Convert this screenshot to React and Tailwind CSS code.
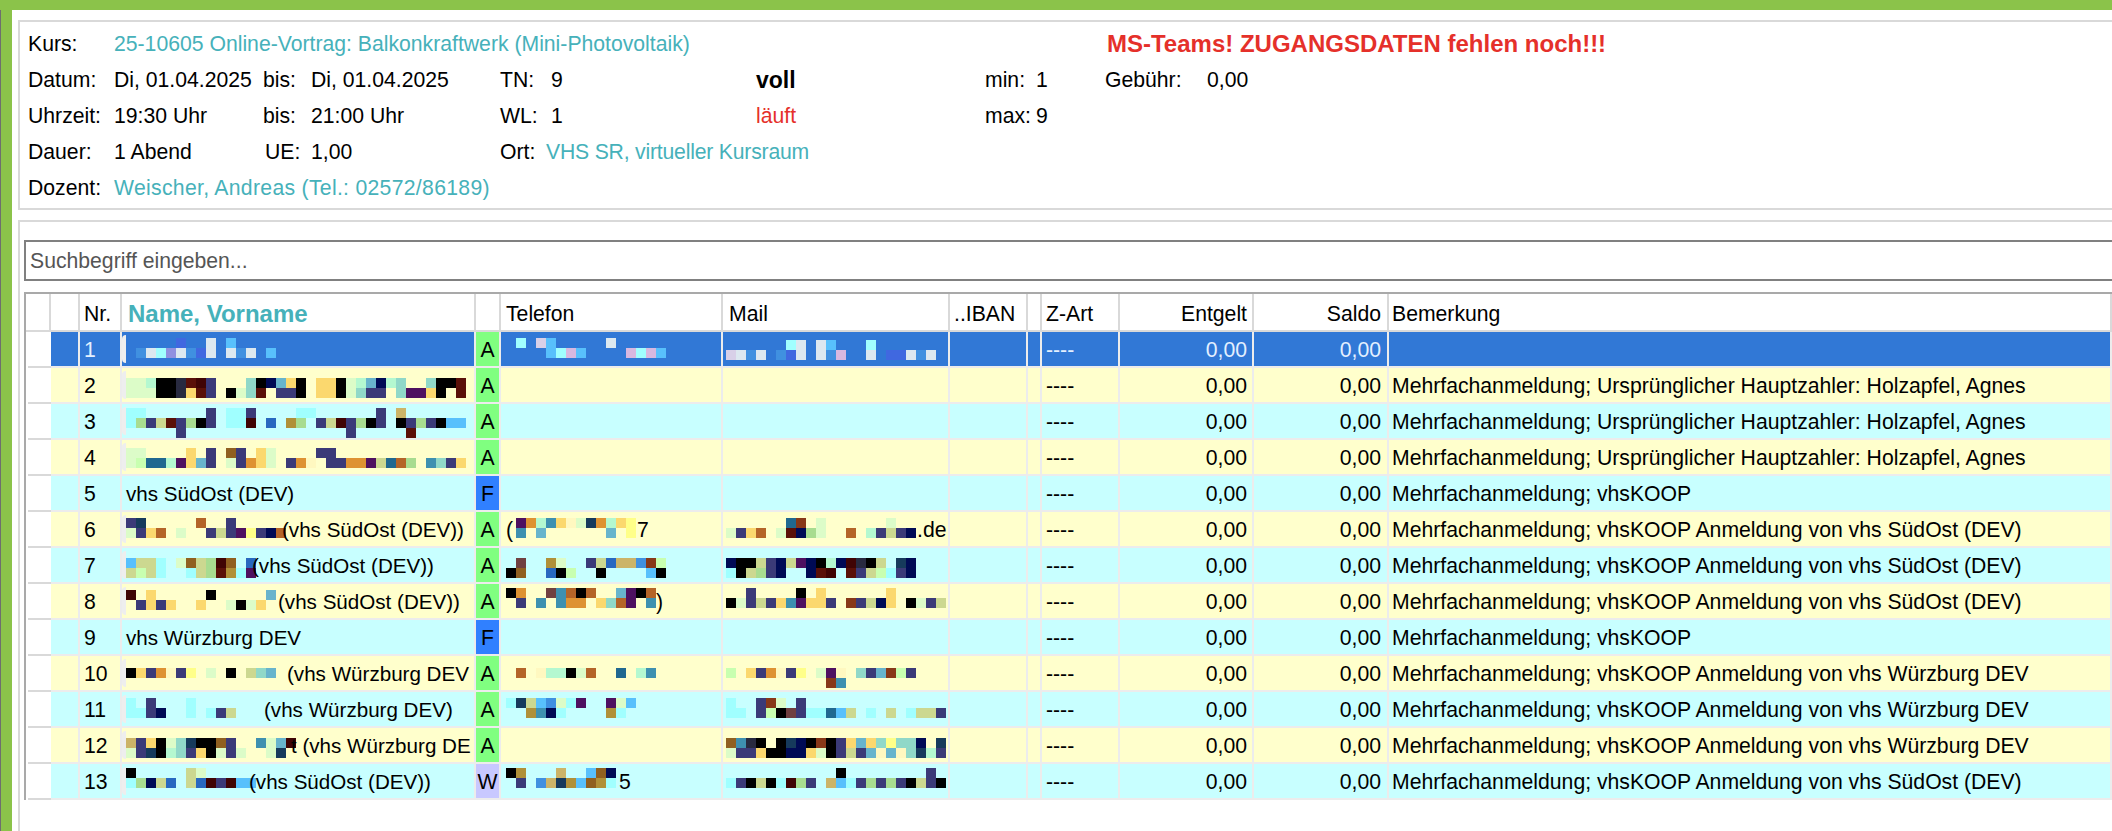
import React from "react";

const colors = {
  k: "#000000",
  n: "#3b3a78",
  N: "#000a55",
  r: "#5a1008",
  R: "#400404",
  y: "#fbd86e",
  Y: "#ffff88",
  e: "#fff8c0",
  o: "#de9232",
  O: "#906020",
  b: "#b46428",
  a: "#b09038",
  h: "#ccb468",
  t: "#3e90b0",
  T: "#68b4cc",
  D: "#163a5c",
  d: "#206890",
  g: "#dcfcc8",
  f: "#c8ffb0",
  G: "#a8dc90",
  m: "#b4f8d0",
  s: "#90d8c8",
  c: "#a0ffff",
  l: "#58c0fc",
  B: "#2868c0",
  C: "#4090e0",
  w: "#dce8f0",
  p: "#4e1060",
  P: "#883818",
  K: "#ccd890",
  v: "#d8d0e8",
  i: "#9090e0",
  I: "#4068e0",
  q: "#d8b8e0",
  x: "#282a40",
  z: "#704040",
};

const HM = "Mehrfachanmeldung; Ursprünglicher Hauptzahler: Holzapfel, Agnes";
const KOOP = "Mehrfachanmeldung; vhsKOOP";
const OST = "Mehrfachanmeldung; vhsKOOP Anmeldung von vhs SüdOst (DEV)";
const WUE = "Mehrfachanmeldung; vhsKOOP Anmeldung von vhs Würzburg DEV";

const rows = [
  {
    nr: 1, type: "A", sel: true, bem: "",
    name: { top: 6, blocks: [".....I..w.l", ".CwciwCIw.wCw.l"] },
    tel: { top: 6, blocks: [".c.vl.....w", "....lcql....qcql"] },
    mail: { top: 8, blocks: ["......cw.wl...c", "vwCw.CIw.wCq..w.IIwCw"] },
  },
  {
    nr: 2, type: "A", bem: HM,
    name: { top: 10, blocks: ["ggmkkxrRn...skNTyk.yykgmTNms..skkr", "gggkkxyrn.kgsr.nnk.yykgsnn.sppyk.r"] },
  },
  {
    nr: 3, type: "A", bem: HM,
    name: { top: 4, blocks: ["cc......n.ccn....cc......n.h", "cGnKrnGkn.ccR.B.aG.nKRnGkn.knGnkll", ".....n................n.....r"] },
  },
  {
    nr: 4, type: "A", bem: HM,
    name: { top: 8, blocks: ["gg....y.n.On.yg....nn", "gfddmpyTn.gnoyg.noe.nnoopKdbG.tsny"] },
  },
  { nr: 5, type: "F", name: "vhs SüdOst (DEV)", bem: KOOP },
  {
    nr: 6, type: "A", bem: OST,
    name: { top: 6, x: 160, text: "(vhs SüdOst (DEV))", blocks: ["nD.....b..n", "gnyb.g..nKnpYnNb"] },
    tel: { top: 6, pre: "(", x: 136, text: "7", blocks: [".pomtyegDomyY", ".t.T......T.Y"] },
    mail: { top: 6, x: 194, text: ".de", blocks: ["......dP.g......g", "gnyb.grNGg..b.mnKnN"] },
  },
  {
    nr: 7, type: "A", bem: OST,
    name: { top: 10, x: 130, text: "(vhs SüdOst (DEV))", blocks: ["lKKc.gOKGRO.B", "KfKc..cKGracp"] },
    tel: { top: 10, blocks: [".z..ag..nKBhhCPf", "kO..Bkf..k....lk"] },
    mail: { top: 10, blocks: ["NkkKnNKpNkmNRxkK.DN", "ckKGnN..NrR.rnKfcnN"] },
  },
  {
    nr: 8, type: "A", bem: OST,
    name: { top: 6, x: 156, text: "(vhs SüdOst (DEV))", blocks: ["R.y.....k.....T", ".nyny..y..gkgy"] },
    tel: { top: 4, x: 155, text: ")", blocks: ["ko..ztbkb..Tpkb", ".n.t.too.ysbp.t"] },
    mail: { top: 4, blocks: ["..n....k.y......y", "kgnKnytpyyn.PnKNy.kgnK"] },
  },
  { nr: 9, type: "F", name: "vhs Würzburg DEV", bem: KOOP },
  {
    nr: 10, type: "A", bem: WUE,
    name: { top: 12, x: 165, text: "(vhs Würzburg DEV", blocks: ["kynoenY.g.k.KsT"] },
    tel: { top: 12, blocks: [".b.emmkgb..d.mt"] },
    mail: { top: 12, blocks: ["f.ynoenY.gpe.snTPfn", "..........Pt"] },
  },
  {
    nr: 11, type: "A", bem: WUE,
    name: { top: 6, x: 142, text: "(vhs Würzburg DEV)", blocks: ["c.n...c", "ccnN..c.cnK"] },
    tel: { top: 6, blocks: ["cDKlCgcp..pgl", "..atNc....ac"] },
    mail: { top: 6, blocks: ["c..nPg.n", "cc.nfkznccdlK.c.K.cKKn"] },
  },
  {
    nr: 12, type: "A", bem: WUE,
    name: { top: 10, x: 169, text: "t (vhs Würzburg DE", blocks: ["hnykgsDkkOn..tgTR", "gnDkmsnykgng..gD"] },
    mail: { top: 10, blocks: ["Otxk.kDNkPknyTysYssN.D", "gnnykkNNygknKnTeTesDmn"] },
  },
  {
    nr: 13, type: "W", bem: OST,
    name: { top: 4, x: 127, text: "(vhs SüdOst (DEV))", blocks: ["k.....Kg", "cGNKB.KBRnRll"] },
    tel: { top: 4, x: 118, text: "5", blocks: ["ka...h..lON", ".n.ChDalOac"] },
    mail: { top: 4, blocks: ["...........k........n", "cnkKkcRGn.hlcnGnGnkKnk"] },
  },
];

const typeColors = {
  A: "bg-[#80ff80]",
  F: "bg-[#3080ff]",
  S: "bg-[#f08040]",
  W: "bg-[#c8c8ff]",
};

const gridCols =
  "grid grid-cols-[25px_29px_42px_354px_25px_222px_227px_78px_14px_78px_134px_135px_1fr]";

const Redacted = ({ d, left, smudge }) => {
  return (
    <>
      {smudge && (
        <div className="absolute left-0 top-[3px] bottom-[3px] w-[4px] rounded-l-full bg-[#eeeeee]" />
      )}
      <div className="absolute flex flex-col" style={{ left, top: d.top }}>
        {d.blocks.map((line, i) => (
          <div key={i} className="flex">
            {line.split("").map((c, j) => (
              <div
                key={j}
                className="w-[10px] h-[10px] shrink-0"
                style={{ backgroundColor: colors[c] || "transparent" }}
              />
            ))}
          </div>
        ))}
      </div>
      {d.pre && <span className="absolute left-[5px]">{d.pre}</span>}
      {d.text && (
        <span className="absolute whitespace-nowrap" style={{ left: d.x }}>
          {d.text}
        </span>
      )}
    </>
  );
};

const Head = ({ children, className = "" }) => (
  <div className={`flex items-center pt-[3px] overflow-hidden whitespace-nowrap border-r-2 border-b-2 border-[#d9d9d9] ${className}`}>
    {children}
  </div>
);

const Row = ({ row }) => {
  const bg = row.sel ? "bg-[#3178d6]" : row.nr % 2 === 0 ? "bg-[#ffffcc]" : "bg-[#c8ffff]";
  const fg = row.sel ? "text-[#e4f0ff]" : "text-black";
  const cell = `relative flex items-center h-[36px] pt-[2px] overflow-hidden whitespace-nowrap border-r-2 border-b-2 border-[#ececec] ${bg} ${fg}`;
  return (
    <div className={gridCols}>
      <div className="ml-[2px] h-[36px] bg-white border-b-2 border-[#d9d9d9]" />
      <div className={cell} />
      <div className={`${cell} pl-[4px]`}>{row.nr}</div>
      <div className={`${cell} pl-[4px] text-[20.6px]`}>
        {typeof row.name === "string" ? row.name : <Redacted d={row.name} left={4} smudge />}
      </div>
      <div className={`relative flex items-center justify-center h-[36px] pt-[2px] text-black border-r-2 border-b-2 border-[#ececec] ${typeColors[row.type]}`}>
        {row.type}
      </div>
      <div className={cell}>{row.tel && <Redacted d={row.tel} left={5} />}</div>
      <div className={cell}>{row.mail && <Redacted d={row.mail} left={3} />}</div>
      <div className={cell} />
      <div className={cell} />
      <div className={`${cell} pl-[4px]`}>----</div>
      <div className={`${cell} justify-end pr-[5px]`}>0,00</div>
      <div className={`${cell} justify-end pr-[6px]`}>0,00</div>
      <div className={`${cell} border-r-0 pl-[3px]`}>{row.bem}</div>
    </div>
  );
};

export default function App() {
  return (
    <div className="h-[831px] overflow-hidden bg-white text-black text-[21.2px] font-['Liberation_Sans',sans-serif]">
      <div className="h-[10px] bg-[#8bc34a]" />
      <div className="flex h-[821px]">
        <div className="w-[1px] bg-[#6e6e6e]" />
        <div className="w-[11px] bg-[#8bc34a]" />
        <div className="flex-1 min-w-0 pl-[6px] pt-[10px]">
          {/* kurs info */}
          <div className="h-[190px] pt-[4px] pl-[8px] border-2 border-r-0 border-[#d9d9d9]">
            <div className="flex items-center h-[36px]">
              <span className="w-[86px]">Kurs:</span>
              <span className="w-[993px] text-[#46b1ba]">25-10605 Online-Vortrag: Balkonkraftwerk (Mini-Photovoltaik)</span>
              <span className="font-bold text-[24px] text-[#e5302a]">MS-Teams! ZUGANGSDATEN fehlen noch!!!</span>
            </div>
            <div className="flex items-center h-[36px]">
              <span className="w-[86px]">Datum:</span>
              <span className="w-[149px]">Di, 01.04.2025</span>
              <span className="w-[48px]">bis:</span>
              <span className="w-[189px]">Di, 01.04.2025</span>
              <span className="w-[51px]">TN:</span>
              <span className="w-[205px]">9</span>
              <span className="w-[229px] font-bold text-[23px]">voll</span>
              <span className="w-[51px]">min:</span>
              <span className="w-[69px]">1</span>
              <span className="w-[102px]">Gebühr:</span>
              <span>0,00</span>
            </div>
            <div className="flex items-center h-[36px]">
              <span className="w-[86px]">Uhrzeit:</span>
              <span className="w-[149px]">19:30 Uhr</span>
              <span className="w-[48px]">bis:</span>
              <span className="w-[189px]">21:00 Uhr</span>
              <span className="w-[51px]">WL:</span>
              <span className="w-[205px]">1</span>
              <span className="w-[229px] text-[#e5302a]">läuft</span>
              <span className="w-[51px]">max:</span>
              <span>9</span>
            </div>
            <div className="flex items-center h-[36px]">
              <span className="w-[86px]">Dauer:</span>
              <span className="w-[151px]">1 Abend</span>
              <span className="w-[46px]">UE:</span>
              <span className="w-[189px]">1,00</span>
              <span className="w-[46px]">Ort:</span>
              <span className="tracking-[-0.2px] text-[#46b1ba]">VHS SR, virtueller Kursraum</span>
            </div>
            <div className="flex items-center h-[36px]">
              <span className="w-[86px]">Dozent:</span>
              <span className="tracking-[0.3px] text-[#46b1ba]">Weischer, Andreas (Tel.: 02572/86189)</span>
            </div>
          </div>

          {/* search + table */}
          <div className="mt-[10px] h-[611px] pl-[4px] pt-[18px] border-2 border-r-0 border-b-0 border-[#d9d9d9]">
            <input
              placeholder="Suchbegriff eingeben..."
              className="block w-full h-[41px] pl-[4px] border-2 border-r-0 border-[#808080] outline-none placeholder:text-[#555555]"
            />
            <div className="mt-[11px] border-t-2 border-l-2 border-[#a9a9a9]">
              <div className={`${gridCols} h-[38px]`}>
                <Head className="border-b-0" />
                <Head className="border-b-0" />
                <Head className="pl-[4px]">Nr.</Head>
                <Head className="pl-[6px] font-bold text-[24px] text-[#46b1ba]">Name, Vorname</Head>
                <Head />
                <Head className="pl-[5px]">Telefon</Head>
                <Head className="pl-[6px]">Mail</Head>
                <Head className="pl-[4px]">..IBAN</Head>
                <Head />
                <Head className="pl-[4px]">Z-Art</Head>
                <Head className="justify-end pr-[5px]">Entgelt</Head>
                <Head className="justify-end pr-[6px]">Saldo</Head>
                <Head className="border-r-0 pl-[3px]">Bemerkung</Head>
              </div>
              {rows.map((row) => (
                <Row key={row.nr} row={row} />
              ))}
            </div>
          </div>
        </div>
      </div>
    </div>
  );
}
